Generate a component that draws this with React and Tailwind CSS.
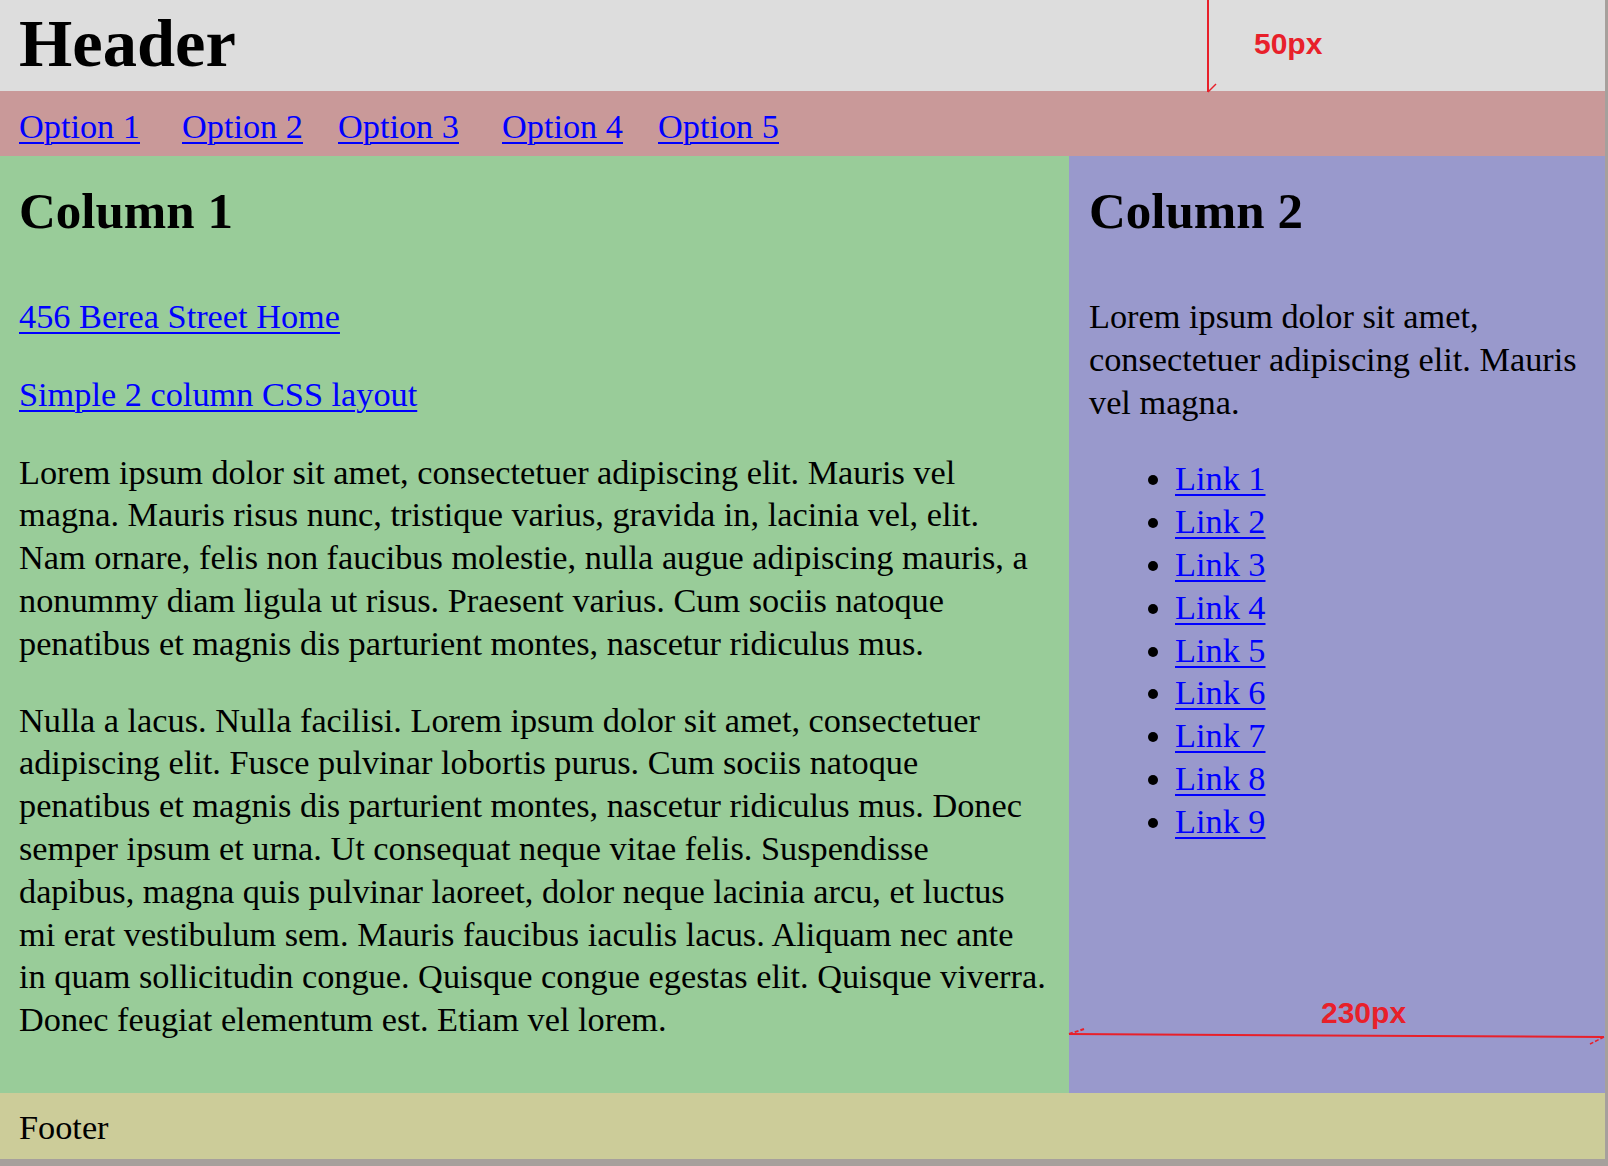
import React from 'react'

const navItems = [
  { label: 'Option 1', className: 'ml-0' },
  { label: 'Option 2', className: 'ml-[42px]' },
  { label: 'Option 3', className: 'ml-[35px]' },
  { label: 'Option 4', className: 'ml-[43px]' },
  { label: 'Option 5', className: 'ml-[35px]' }
]

const sideLinks = [
  'Link 1',
  'Link 2',
  'Link 3',
  'Link 4',
  'Link 5',
  'Link 6',
  'Link 7',
  'Link 8',
  'Link 9'
]

const linkClass =
  'text-[#0000ff] underline decoration-[2px] underline-offset-[4px]'

const App = () => {
  return (
    <div className="h-[1166px] w-full overflow-hidden bg-[#a6a09c] font-['Liberation_Serif',serif] text-[34.3px] leading-[42.8px] text-black">
      <div className="relative w-[1605px]">
        {/* header */}
        <div className="h-[91px] bg-[#dddddd] px-[19px] pt-[4px]">
          <h1 className="text-[68.5px] font-bold leading-[78px]">Header</h1>
        </div>

        {/* nav */}
        <div className="flex h-[65px] items-center bg-[#c99999] px-[19px] pt-[5px]">
          {navItems.map((item, index) => (
            <a key={index} href="#" className={`${linkClass} ${item.className}`}>
              {item.label}
            </a>
          ))}
        </div>

        {/* columns */}
        <div className="flex h-[937px]">
          <div className="w-[1069px] bg-[#99cc99] pl-[19px] pr-[21px] pt-[25px]">
            <h2 className="text-[51px] font-bold leading-[60px]">Column 1</h2>
            <p className="mt-[54px]">
              <a href="#" className={linkClass}>
                456 Berea Street Home
              </a>
            </p>
            <p className="mt-[35px]">
              <a href="#" className={linkClass}>
                Simple 2 column CSS layout
              </a>
            </p>
            <p className="mt-[35px]">
              Lorem ipsum dolor sit amet, consectetuer adipiscing elit. Mauris
              vel magna. Mauris risus nunc, tristique varius, gravida in,
              lacinia vel, elit. Nam ornare, felis non faucibus molestie, nulla
              augue adipiscing mauris, a nonummy diam ligula ut risus. Praesent
              varius. Cum sociis natoque penatibus et magnis dis parturient
              montes, nascetur ridiculus mus.
            </p>
            <p className="mt-[34px]">
              Nulla a lacus. Nulla facilisi. Lorem ipsum dolor sit amet,
              consectetuer adipiscing elit. Fusce pulvinar lobortis purus. Cum
              sociis natoque penatibus et magnis dis parturient montes,
              nascetur ridiculus mus. Donec semper ipsum et urna. Ut consequat
              neque vitae felis. Suspendisse dapibus, magna quis pulvinar
              laoreet, dolor neque lacinia arcu, et luctus mi erat vestibulum
              sem. Mauris faucibus iaculis lacus. Aliquam nec ante in quam
              sollicitudin congue. Quisque congue egestas elit. Quisque
              viverra. Donec feugiat elementum est. Etiam vel lorem.
            </p>
          </div>

          <div className="w-[536px] bg-[#9999cc] px-[20px] pt-[25px]">
            <h2 className="text-[51px] font-bold leading-[60px]">Column 2</h2>
            <p className="mt-[54px]">
              Lorem ipsum dolor sit amet, consectetuer adipiscing elit. Mauris
              vel magna.
            </p>
            <ul className="mt-[34px] list-disc pl-[86px]">
              {sideLinks.map((item, index) => (
                <li key={index}>
                  <a href="#" className={linkClass}>
                    {item}
                  </a>
                </li>
              ))}
            </ul>
          </div>
        </div>

        {/* footer */}
        <div className="flex h-[66px] items-center bg-[#cccc99] px-[19px] pt-[3px]">
          Footer
        </div>

        {/* measurement notes */}
        <div className="pointer-events-none absolute left-[1254px] top-[27px] font-['Liberation_Sans',sans-serif] text-[30px] font-bold leading-[34px] text-[#e8202a]">
          50px
        </div>
        <svg
          className="pointer-events-none absolute left-[1200px] top-0"
          width="20"
          height="94"
          viewBox="0 0 20 94"
        >
          <line x1="8" y1="0" x2="8" y2="92" stroke="#e8202a" strokeWidth="2" />
          <line x1="8" y1="92" x2="16" y2="84" stroke="#e8202a" strokeWidth="1.5" />
        </svg>

        <div className="pointer-events-none absolute left-[1321px] top-[996px] font-['Liberation_Sans',sans-serif] text-[30px] font-bold leading-[34px] text-[#e8202a]">
          230px
        </div>
        <svg
          className="pointer-events-none absolute left-[1066px] top-[1024px]"
          width="540"
          height="24"
          viewBox="0 0 540 24"
        >
          <line x1="3" y1="10" x2="538" y2="13" stroke="#e8202a" strokeWidth="2" />
          <line x1="3" y1="10" x2="18" y2="5" stroke="#e8202a" strokeWidth="2" strokeDasharray="4 2" />
          <line x1="538" y1="13" x2="524" y2="20" stroke="#e8202a" strokeWidth="1.5" strokeDasharray="4 2" />
        </svg>
      </div>
    </div>
  )
}

export default App
